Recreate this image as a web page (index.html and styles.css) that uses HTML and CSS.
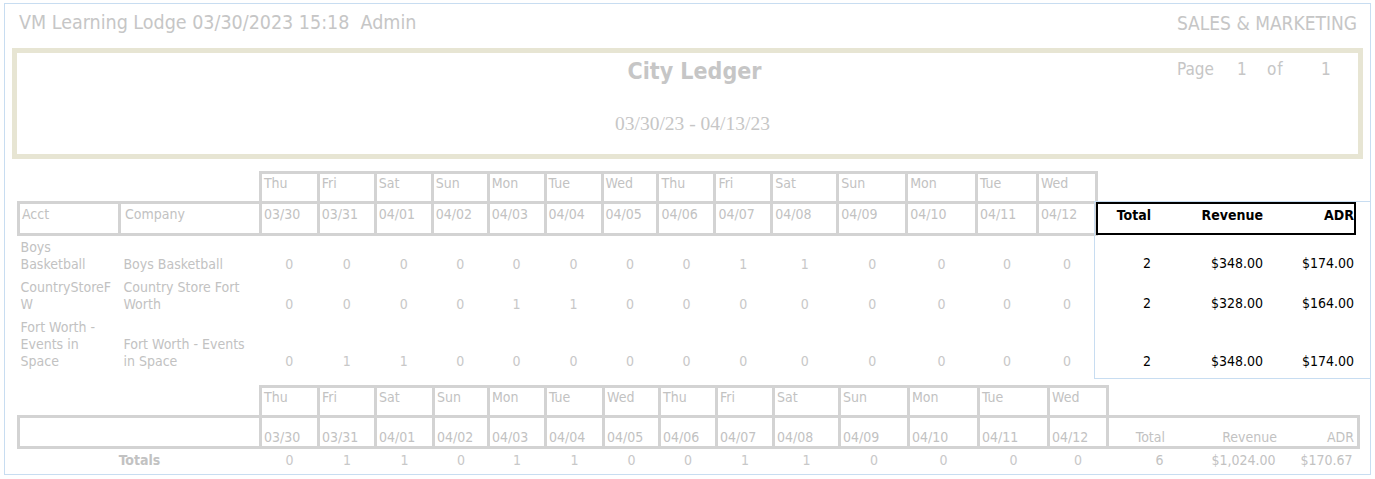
FILE: index.html
```html
<!DOCTYPE html>
<html>
<head>
<meta charset="utf-8">
<title>City Ledger</title>
<link rel="stylesheet" href="styles.css">
</head>
<body>
<div class="page">
  <div class="top-line">
    <span class="who">VM Learning Lodge 03/30/2023 15:18&nbsp;&nbsp;Admin</span>
    <span class="dept">SALES &amp; MARKETING</span>
  </div>

  <div class="title-box">
    <div class="title-center">
      <div class="title">City Ledger</div>
      <div class="range">03/30/23 - 04/13/23</div>
    </div>
    <div class="pager"><span class="pg-label">Page</span><span class="pg-num">1</span><span class="pg-of">of</span><span class="pg-num">1</span></div>
  </div>

  <div class="grid-top">
    <table class="ledger">
      <colgroup>
        <col class="w-acct"><col class="w-comp">
        <col class="w58"><col class="w57"><col class="w57"><col class="w56"><col class="w57"><col class="w57"><col class="w56">
        <col class="w57"><col class="w57"><col class="w66"><col class="w69"><col class="w70"><col class="w61"><col class="w59">
      </colgroup>
      <tr class="day-row">
        <td></td><td></td>
        <td class="box">Thu</td><td class="box">Fri</td><td class="box">Sat</td><td class="box">Sun</td><td class="box">Mon</td><td class="box">Tue</td><td class="box">Wed</td>
        <td class="box">Thu</td><td class="box">Fri</td><td class="box">Sat</td><td class="box">Sun</td><td class="box">Mon</td><td class="box">Tue</td><td class="box">Wed</td>
      </tr>
      <tr class="date-row">
        <td class="box">Acct</td><td class="box head-c">Company</td>
        <td class="box">03/30</td><td class="box">03/31</td><td class="box">04/01</td><td class="box">04/02</td><td class="box">04/03</td><td class="box">04/04</td><td class="box">04/05</td>
        <td class="box">04/06</td><td class="box">04/07</td><td class="box">04/08</td><td class="box">04/09</td><td class="box">04/10</td><td class="box">04/11</td><td class="box">04/12</td>
      </tr>
      <tr class="data-row r2">
        <td class="acct">Boys<br>Basketball</td><td class="comp">Boys Basketball</td>
        <td class="v">0</td><td class="v">0</td><td class="v">0</td><td class="v">0</td><td class="v">0</td><td class="v">0</td><td class="v">0</td>
        <td class="v">0</td><td class="v">1</td><td class="v">1</td><td class="v">0</td><td class="v">0</td><td class="v">0</td><td class="v">0</td>
      </tr>
      <tr class="data-row r2">
        <td class="acct">CountryStoreF<br>W</td><td class="comp">Country Store Fort<br>Worth</td>
        <td class="v">0</td><td class="v">0</td><td class="v">0</td><td class="v">0</td><td class="v">1</td><td class="v">1</td><td class="v">0</td>
        <td class="v">0</td><td class="v">0</td><td class="v">0</td><td class="v">0</td><td class="v">0</td><td class="v">0</td><td class="v">0</td>
      </tr>
      <tr class="data-row r3">
        <td class="acct">Fort Worth -<br>Events in<br>Space</td><td class="comp">Fort Worth - Events<br>in Space</td>
        <td class="v">0</td><td class="v">1</td><td class="v">1</td><td class="v">0</td><td class="v">0</td><td class="v">0</td><td class="v">0</td>
        <td class="v">0</td><td class="v">0</td><td class="v">0</td><td class="v">0</td><td class="v">0</td><td class="v">0</td><td class="v">0</td>
      </tr>
    </table>

    <div class="summary">
      <div class="sum-head">
        <span>Total</span><span>Revenue</span><span>ADR</span>
      </div>
      <div class="sum-row r2"><span>2</span><span>$348.00</span><span>$174.00</span></div>
      <div class="sum-row r2"><span>2</span><span>$328.00</span><span>$164.00</span></div>
      <div class="sum-row r3"><span>2</span><span>$348.00</span><span>$174.00</span></div>
    </div>
  </div>

  <table class="ledger totals">
    <colgroup>
      <col class="w-label">
      <col class="w58"><col class="w57"><col class="w58"><col class="w55"><col class="w57"><col class="w58"><col class="w56">
      <col class="w57"><col class="w57"><col class="w66"><col class="w69"><col class="w70"><col class="w70"><col class="w59">
      <col class="w-sum">
    </colgroup>
    <tr class="day-row">
      <td></td>
      <td class="box">Thu</td><td class="box">Fri</td><td class="box">Sat</td><td class="box">Sun</td><td class="box">Mon</td><td class="box">Tue</td><td class="box">Wed</td>
      <td class="box">Thu</td><td class="box">Fri</td><td class="box">Sat</td><td class="box">Sun</td><td class="box">Mon</td><td class="box">Tue</td><td class="box">Wed</td>
      <td></td>
    </tr>
    <tr class="date-row bottom">
      <td class="box"></td>
      <td class="box">03/30</td><td class="box">03/31</td><td class="box">04/01</td><td class="box">04/02</td><td class="box">04/03</td><td class="box">04/04</td><td class="box">04/05</td>
      <td class="box">04/06</td><td class="box">04/07</td><td class="box">04/08</td><td class="box">04/09</td><td class="box">04/10</td><td class="box">04/11</td><td class="box">04/12</td>
      <td class="box"><div class="sum-cols"><span>Total</span><span>Revenue</span><span>ADR</span></div></td>
    </tr>
    <tr class="total-row">
      <td class="tot-label">Totals</td>
      <td class="v">0</td><td class="v">1</td><td class="v">1</td><td class="v">0</td><td class="v">1</td><td class="v">1</td><td class="v">0</td>
      <td class="v">0</td><td class="v">1</td><td class="v">1</td><td class="v">0</td><td class="v">0</td><td class="v">0</td><td class="v">0</td>
      <td><div class="sum-cols"><span>6</span><span>$1,024.00</span><span>$170.67</span></div></td>
    </tr>
  </table>
</div>
</body>
</html>
```

FILE: styles.css
```css
html, body {
  margin: 0;
  padding: 0;
  background: #ffffff;
}

body {
  font-family: "DejaVu Sans Condensed", "DejaVu Sans", sans-serif;
  font-stretch: condensed;
  color: #c2c2c2;
}

.page {
  margin: 3px 5px 0 4px;
  width: 1365px;
  height: 470px;
  border: 1px solid #c8ddf1;
}

/* ---------- header line ---------- */
.top-line {
  display: flex;
  justify-content: space-between;
  align-items: center;
  height: 44px;
  padding: 0 13px 6px 14px;
  font-size: 19.5px;
  line-height: 22px;
  box-sizing: border-box;
  color: #c6c6c6;
}

.dept { font-size: 19px; }

/* ---------- title box ---------- */
.title-box {
  position: relative;
  margin: 0 7px;
  height: 111px;
  box-sizing: border-box;
  border: 5px solid #e7e5d3;
  display: flex;
  justify-content: center;
}

.title-center {
  display: flex;
  flex-direction: column;
  align-items: center;
  padding-left: 10px;
}

.title {
  margin-top: 5px;
  padding-left: 4px;
  font-size: 23px;
  line-height: 26px;
  font-weight: bold;
  color: #c6c6c6;
}

.range {
  margin-top: 29px;
  font-family: "Liberation Serif", serif;
  font-size: 19.5px;
  line-height: 22px;
  color: #c6c6c6;
}

.pager {
  position: absolute;
  top: 6px;
  right: 27px;
  display: flex;
  font-size: 17px;
  line-height: 20px;
  color: #c6c6c6;
}

.pg-label { width: 60px; }
.pg-num { width: 30px; }
.pg-of { width: 54px; letter-spacing: 1px; }
.pager .pg-num:last-child { width: 10px; }

/* ---------- tables ---------- */
.grid-top {
  display: flex;
  align-items: flex-start;
  margin-top: 12px;
}

.ledger {
  border-collapse: collapse;
  table-layout: fixed;
  margin-left: 12px;
  font-size: 14px;
  line-height: 17px;
}

.ledger td {
  padding: 0 2px;
  overflow: hidden;
  white-space: nowrap;
}

.ledger td.box {
  border: 3px solid #d3d3d3;
  vertical-align: top;
  padding-top: 1px;
}

.w-acct { width: 101px; }
.w-comp { width: 141px; }
.w-label { width: 242px; }
.w-sum { width: 251px; }
.w55 { width: 55px; }
.w56 { width: 56px; }
.w57 { width: 57px; }
.w58 { width: 58px; }
.w59 { width: 59px; }
.w61 { width: 61px; }
.w66 { width: 66px; }
.w69 { width: 69px; }
.w70 { width: 70px; }

.day-row td { height: 26px; }
.date-row td { height: 27px; }
.date-row td.box { padding-top: 2px; }

.date-row.bottom td { height: 28px; }
.date-row.bottom td.box { vertical-align: bottom; padding-top: 0; padding-bottom: 0; }

.date-row td.head-c { padding-left: 4px; }

.data-row td {
  vertical-align: bottom;
  padding-top: 3px;
  padding-bottom: 3px;
}
.data-row.r2 td { height: 34px; }
.data-row.r3 td { height: 51px; }

.data-row td.comp { padding-left: 4px; }

td.v {
  text-align: center;
  color: #c8c8c8;
}

/* ---------- summary (right) ---------- */
.summary {
  margin-top: 30px;
  margin-left: -4px;
  flex: 1;
  border: 1px solid #c8ddf1;
  border-right: none;
  height: 178px;
  box-sizing: border-box;
  color: #000;
  font-size: 14px;
  line-height: 17px;
}

.sum-head {
  display: grid;
  grid-template-columns: 53px 112px 91px;
  margin: 0 14px 0 1px;
  height: 33px;
  box-sizing: border-box;
  border: 2px solid #000;
  font-weight: bold;
  padding-top: 3px;
}

.sum-head span,
.sum-row span,
.sum-cols span {
  text-align: right;
}

.sum-row {
  display: grid;
  grid-template-columns: 53px 112px 91px;
  margin: 0 16px 0 3px;
  box-sizing: border-box;
  align-items: end;
  padding-bottom: 3px;
}
.sum-row.r2 { height: 40px; }
.sum-row.r3 { height: 58px; }

/* ---------- totals ---------- */
.totals {
  margin-top: 6px;
}

.sum-cols {
  display: grid;
  grid-template-columns: 54px 112px 77px;
}

.total-row td {
  height: 22px;
  vertical-align: top;
  padding-top: 3px;
}

.tot-label {
  text-align: center;
  font-weight: bold;
}
```
